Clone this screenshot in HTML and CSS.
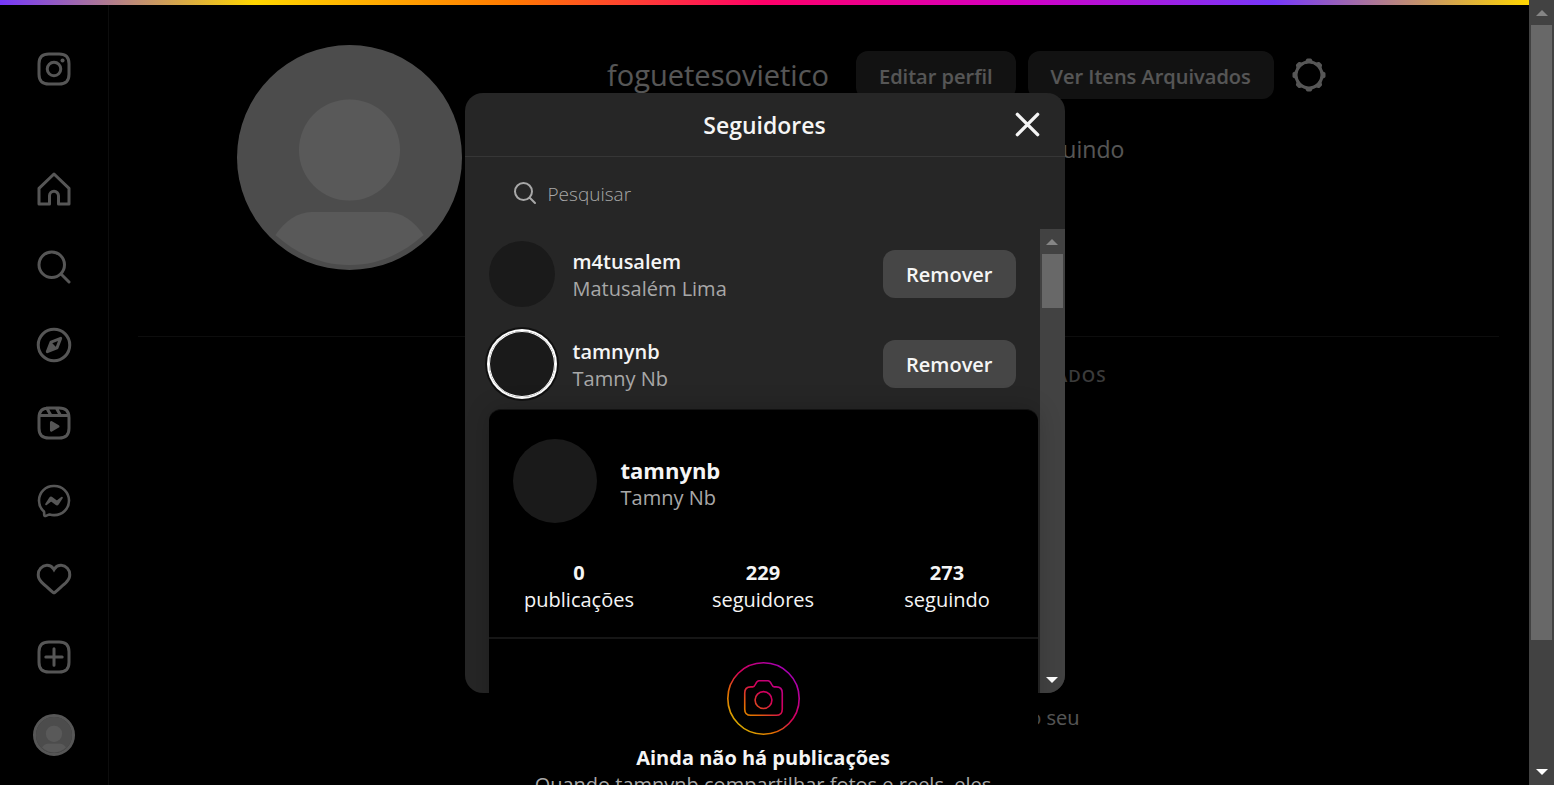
FILE: index.html
```html
<!DOCTYPE html>
<html lang="pt-BR">
<head>
<meta charset="utf-8">
<title>Seguidores • foguetesovietico</title>
<link rel="stylesheet" href="styles.css">
</head>
<body>
<svg class="defs" aria-hidden="true">
  <symbol id="person" viewBox="0 0 225 225">
    <circle class="person-bg" cx="112.500" cy="112.500" r="112.500"/>
    <circle class="person-fg" cx="112.500" cy="105" r="50.500"/>
    <path class="person-fg" d="M38.500 190C48 176 61 167 75 167H150C164 167 177 176 186.500 190C165 209 141 220 112.500 220S60 209 38.500 190Z"/>
  </symbol>
</svg>
<div class="app">
  <div class="page">
    <div class="rainbow"></div>
    <nav class="sidebar" aria-label="Principal">
      <a class="nav-item nav-logo" href="#" aria-label="Instagram"><svg class="icon" viewBox="0 0 24 24"><path d="M2 12v3.450c0 2.849.698 4.005 1.606 4.944.94.909 2.098 1.608 4.946 1.608h6.896c2.848 0 4.006-.7 4.946-1.608C21.302 19.455 22 18.300 22 15.450V8.552c0-2.849-.698-4.006-1.606-4.945C19.454 2.700 18.296 2 15.448 2H8.552c-2.848 0-4.006.699-4.946 1.607C2.698 4.547 2 5.703 2 8.552Z"/><circle cx="12" cy="12" r="4.500"/><circle class="solid" cx="17.700" cy="6.300" r="1.350"/></svg></a>
      <a class="nav-item" href="#" aria-label="Página inicial"><svg class="icon" viewBox="0 0 24 24"><path d="M9.005 16.545a2.997 2.997 0 0 1 2.997-2.997A2.997 2.997 0 0 1 15 16.545V22h7V11.543L12 2 2 11.543V22h7.005Z"/></svg></a>
      <a class="nav-item" href="#" aria-label="Pesquisa"><svg class="icon" viewBox="0 0 24 24"><path d="M19 10.500A8.500 8.500 0 1 1 10.500 2a8.500 8.500 0 0 1 8.500 8.500ZM16.511 16.511 22 22"/></svg></a>
      <a class="nav-item" href="#" aria-label="Explorar"><svg class="icon" viewBox="0 0 24 24"><path d="M13.941 13.953 7.581 16.424 10.060 10.056 16.420 7.585Z"/><path class="solid" d="M10.060 10.056 13.949 13.945 7.581 16.424Z"/><circle cx="12" cy="12" r="10.500"/></svg></a>
      <a class="nav-item" href="#" aria-label="Reels"><svg class="icon" viewBox="0 0 24 24"><path d="M2.049 7.002H21.950M13.504 2.001 16.362 7.002M7.207 2.110 10.002 7.002M2 12.001v3.449c0 2.849.698 4.006 1.606 4.945.94.908 2.098 1.607 4.946 1.607h6.896c2.848 0 4.006-.699 4.946-1.607.908-.939 1.606-2.096 1.606-4.945V8.552c0-2.848-.698-4.006-1.606-4.945C19.454 2.699 18.296 2 15.448 2H8.552c-2.848 0-4.006.699-4.946 1.607C2.698 4.546 2 5.704 2 8.552Z"/><path class="solid" d="M9.763 17.664a.908.908 0 0 1-.454-.787V11.630a.909.909 0 0 1 1.364-.788l4.545 2.624a.909.909 0 0 1 0 1.575l-4.545 2.624a.91.91 0 0 1-.91 0Z"/></svg></a>
      <a class="nav-item" href="#" aria-label="Mensagens"><svg class="icon" viewBox="0 0 24 24"><path class="medium" d="M12.003 2.001a9.705 9.705 0 1 1 0 19.400 10.876 10.876 0 0 1-2.895-.384.798.798 0 0 0-.533.04l-1.984.876a.801.801 0 0 1-1.123-.708l-.054-1.780a.806.806 0 0 0-.27-.569 9.490 9.490 0 0 1-3.140-7.175 9.650 9.650 0 0 1 10-9.700Z"/><path class="solid" d="M17.790 10.132a.659.659 0 0 0-.962-.873l-2.556 2.050a.63.63 0 0 1-.758.002L11.060 9.470a1.576 1.576 0 0 0-2.277.42l-2.567 3.980a.659.659 0 0 0 .961.875l2.556-2.049a.63.63 0 0 1 .759-.002l2.452 1.840a1.576 1.576 0 0 0 2.278-.42Z"/></svg></a>
      <a class="nav-item" href="#" aria-label="Notificações"><svg class="icon" viewBox="0 0 24 24"><path class="solid" d="M16.792 3.904A4.989 4.989 0 0 1 21.500 9.122c0 3.072-2.652 4.959-5.197 7.222-2.512 2.243-3.865 3.469-4.303 3.752-.477-.309-2.143-1.823-4.303-3.752C5.141 14.072 2.500 12.167 2.500 9.122a4.989 4.989 0 0 1 4.708-5.218 4.210 4.210 0 0 1 3.675 1.941c.84 1.175.98 1.763 1.120 1.763s.278-.588 1.110-1.766a4.170 4.170 0 0 1 3.679-1.938Zm0-2a6.040 6.040 0 0 0-4.797 2.127 6.052 6.052 0 0 0-4.787-2.127A6.985 6.985 0 0 0 .5 9.122c0 3.610 2.550 5.827 5.015 7.970.283.246.569.494.853.747l1.027.918a44.998 44.998 0 0 0 3.518 3.018 2 2 0 0 0 2.174 0 45.263 45.263 0 0 0 3.626-3.115l.922-.824c.293-.26.59-.519.885-.774 2.334-2.025 4.980-4.320 4.980-7.940a6.985 6.985 0 0 0-6.708-7.218Z"/></svg></a>
      <a class="nav-item" href="#" aria-label="Criar"><svg class="icon" viewBox="0 0 24 24"><path d="M2 12v3.450c0 2.849.698 4.005 1.606 4.944.94.909 2.098 1.608 4.946 1.608h6.896c2.848 0 4.006-.7 4.946-1.608C21.302 19.455 22 18.300 22 15.450V8.552c0-2.849-.698-4.006-1.606-4.945C19.454 2.700 18.296 2 15.448 2H8.552c-2.848 0-4.006.699-4.946 1.607C2.698 4.547 2 5.703 2 8.552ZM6.545 12.001H17.455M12.003 6.545V17.455"/></svg></a>
      <a class="nav-item" href="#" aria-label="Perfil"><span class="nav-avatar"><svg viewBox="0 0 225 225"><use href="#person"/></svg></span></a>
    </nav>

    <main class="profile">
      <header class="profile-head">
        <svg class="profile-photo" viewBox="0 0 225 225" role="img" aria-label="Foto do perfil"><use href="#person"/></svg>
        <section class="profile-info">
          <div class="profile-row">
            <h2 class="username">foguetesovietico</h2>
            <div class="profile-actions">
              <button class="btn btn-dark" type="button">Editar perfil</button>
              <button class="btn btn-dark" type="button">Ver Itens Arquivados</button>
            </div>
            <button class="icon-btn" type="button" aria-label="Opções"><svg class="icon" viewBox="0 0 24 24"><circle cx="12" cy="12" r="8.635"/><path d="M14.232 3.656a1.269 1.269 0 0 1-.796-.66L12.930 2h-1.860l-.505.996a1.269 1.269 0 0 1-.796.66m-.001 16.688a1.269 1.269 0 0 1 .796.66l.505.996h1.862l.505-.996a1.269 1.269 0 0 1 .796-.66M3.656 9.768a1.269 1.269 0 0 1-.66.796L2 11.070v1.862l.996.505a1.269 1.269 0 0 1 .66.796m16.688-.001a1.269 1.269 0 0 1 .66-.796L22 12.930v-1.860l-.996-.505a1.269 1.269 0 0 1-.66-.796M7.678 4.522a1.269 1.269 0 0 1-1.030.096l-1.060-.348L4.270 5.587l.348 1.062a1.269 1.269 0 0 1-.096 1.030m11.800 11.799a1.269 1.269 0 0 1 1.030-.096l1.060.348 1.318-1.317-.348-1.062a1.269 1.269 0 0 1 .096-1.030m-14.956.001a1.269 1.269 0 0 1 .096 1.030l-.348 1.060 1.317 1.318 1.062-.348a1.269 1.269 0 0 1 1.030.096m11.799-11.800a1.269 1.269 0 0 1-.096-1.030l.348-1.060-1.317-1.318-1.062.348a1.269 1.269 0 0 1-1.030-.096"/></svg></button>
          </div>
          <p class="profile-stats">seguindo</p>
        </section>
      </header>
      <div class="tabs"><a class="tab" href="#">MARCADOS</a></div>
      <p class="profile-empty">no seu</p>
    </main>

    <div class="backdrop">
      <div class="dialog" role="dialog" aria-labelledby="dialog-title">
        <header class="dialog-head">
          <h1 class="dialog-title" id="dialog-title">Seguidores</h1>
          <button class="close" type="button" aria-label="Fechar"><svg viewBox="0 0 24 24"><path d="M3 3 21 21M21 3 3 21"/></svg></button>
        </header>
        <label class="search">
          <svg class="search-icon" viewBox="0 0 24 24"><path d="M19 10.500A8.500 8.500 0 1 1 10.500 2a8.500 8.500 0 0 1 8.500 8.500ZM16.511 16.511 22 22"/></svg>
          <input class="search-input" type="text" placeholder="Pesquisar" aria-label="Pesquisar">
        </label>
        <div class="list-area">
          <ul class="list">
            <li class="follower">
              <span class="avatar"></span>
              <div class="who"><a class="who-user" href="#">m4tusalem</a><span class="who-name">Matusalém Lima</span></div>
              <button class="btn btn-grey" type="button">Remover</button>
            </li>
            <li class="follower">
              <span class="avatar avatar-story"></span>
              <div class="who"><a class="who-user" href="#">tamnynb</a><span class="who-name">Tamny Nb</span></div>
              <button class="btn btn-grey" type="button">Remover</button>
            </li>
          </ul>
          <div class="scrollbar" aria-hidden="true"><i class="arrow arrow-up"></i><i class="thumb thumb-list"></i><i class="arrow arrow-down"></i></div>
        </div>

        <article class="hovercard">
          <header class="card-head">
            <span class="avatar avatar-large"></span>
            <div class="who"><a class="who-user who-user-large" href="#">tamnynb</a><span class="who-name">Tamny Nb</span></div>
          </header>
          <ul class="card-stats">
            <li><strong>0</strong><span>publicações</span></li>
            <li><strong>229</strong><span>seguidores</span></li>
            <li><strong>273</strong><span>seguindo</span></li>
          </ul>
          <section class="card-empty">
            <svg class="camera" viewBox="0 0 72 72" aria-hidden="true">
              <defs><linearGradient id="glow" gradientUnits="userSpaceOnUse" x1="10" y1="66" x2="62" y2="8"><stop offset="0" stop-color="#d6b300"/><stop offset=".28" stop-color="#e36c00"/><stop offset=".55" stop-color="#d60058"/><stop offset="1" stop-color="#a400b8"/></linearGradient></defs>
              <circle cx="36" cy="36" r="35.200"/>
              <path d="M23.500 24.500H25.500C28.500 24.500 28 18.500 31.500 18.500H40.500C44 18.500 43.500 24.500 46.500 24.500H48.500Q54.500 24.500 54.500 30.500V46.500Q54.500 52.500 48.500 52.500H23.500Q17.500 52.500 17.500 46.500V30.500Q17.500 24.500 23.500 24.500Z"/>
              <circle cx="36" cy="37.500" r="8.300"/>
            </svg>
            <h2 class="card-title">Ainda não há publicações</h2>
            <p class="card-text">Quando tamnynb compartilhar fotos e reels, eles</p>
          </section>
        </article>
      </div>
    </div>
  </div>
  <div class="scrollbar" aria-hidden="true"><i class="arrow arrow-up"></i><i class="thumb thumb-page"></i><i class="arrow arrow-down"></i></div>
</div>
</body>
</html>
```
FILE: styles.css
```css
* { box-sizing: border-box; }
body, h1, h2, p, ul { margin: 0; padding: 0; }
ul { list-style: none; }
body {
  background: #000;
  color: #f5f5f5;
  font-family: "Segoe UI", "Open Sans", "Noto Sans", sans-serif;
  font-size: 20px;
  line-height: 27px;
  overflow: hidden;
}
a { color: inherit; text-decoration: none; }
button { font: inherit; color: inherit; border: 0; background: none; padding: 0; }
svg { display: block; fill: none; }
.defs { display: none; }
.person-bg { fill: #dbdbdb; }
.person-fg { fill: #fff; }

.app { display: flex; height: 100vh; overflow: hidden; }
.page { flex: 1; min-width: 0; position: relative; display: flex; }
.rainbow {
  position: absolute; top: 0; left: 0; right: 0; height: 5px; z-index: 3;
  background: linear-gradient(90deg, #7638fa, #ffd600, #ff7a00, #ff0069, #d300c5, #7638fa, #ffd600);
}

/* Sidebar */
.sidebar {
  width: 109px; border-right: 1px solid #262626;
  display: flex; flex-direction: column; align-items: center; gap: 6px;
  padding-top: 33px;
}
.nav-item { flex: none; width: 72px; height: 72px; display: grid; place-items: center; }
.nav-logo { margin-bottom: 42px; }
.icon { width: 36px; height: 36px; stroke: #f5f5f5; stroke-width: 2; stroke-linecap: round; stroke-linejoin: round; }
.icon .solid { fill: #f5f5f5; stroke: none; }
.icon .medium { stroke-width: 1.739; }
.nav-avatar { width: 42px; height: 42px; border: 3px solid #f5f5f5; border-radius: 50%; background: #999; }

/* Profile */
.profile { flex: 1; min-width: 0; padding: 45px 30px 0 29px; }
.profile-head { display: flex; padding-bottom: 66px; border-bottom: 1px solid #262626; }
.profile-photo { flex: none; width: 225px; height: 225px; margin: 0 145px 0 99px; }
.profile-row { display: flex; align-items: center; height: 60px; }
.username { font-size: 29px; line-height: 36px; font-weight: 400; width: 249px; }
.profile-actions { display: flex; gap: 12px; margin-right: 17px; }
.btn { height: 48px; border-radius: 12px; padding: 2px 23px 0; font-weight: 600; white-space: nowrap; }
.btn-dark { background: #363636; }
.profile-stats { padding: 29px 0 0 419px; font-size: 23px; line-height: 30px; }
.tabs { max-width: 576px; margin: 0 auto; padding-top: 24px; text-align: right; }
.tab { font-size: 17px; letter-spacing: 1px; color: #a8a8a8; font-weight: 600; }
.profile-empty { max-width: 522px; margin: 0 auto; padding-top: 315px; text-align: right; }

/* Dialog */
.backdrop { position: absolute; inset: 0; background: rgba(0, 0, 0, .65); display: grid; place-items: center; z-index: 2; }
.dialog { position: relative; width: 600px; height: 600px; background: #262626; border-radius: 18px; display: flex; flex-direction: column; }
.dialog-head { display: grid; grid-template-columns: 75px 1fr 75px; align-items: center; height: 64px; border-bottom: 1px solid #363636; }
.dialog-title { grid-column: 2; padding-top: 2px; font-size: 23px; font-weight: 600; text-align: center; }
.close { justify-self: center; }
.close svg { width: 27px; height: 27px; stroke: #f5f5f5; stroke-width: 3; stroke-linecap: round; }
.search { display: flex; align-items: center; gap: 11px; height: 72px; padding: 0 48px; }
.search-icon { width: 24px; height: 24px; stroke: #a8a8a8; stroke-width: 2; stroke-linecap: round; }
.search-input { flex: 1; border: 0; outline: 0; background: none; padding: 3px 0 0; font: inherit; font-size: 19px; font-weight: 300; color: #f5f5f5; }
.search-input::placeholder { color: #a8a8a8; opacity: 1; }
.list-area { flex: 1; display: flex; overflow: hidden; border-bottom-right-radius: 18px; }
.list { flex: 1; }
.follower { display: flex; align-items: center; gap: 18px; height: 90px; padding: 0 24px; }
.avatar { flex: none; width: 66px; height: 66px; border-radius: 50%; background: #1a1a1a; }
.avatar-story { box-shadow: 0 0 0 1px #fff inset, 0 0 0 2px #fff, 0 0 0 4px #111; }
.avatar-large { width: 84px; height: 84px; }
.who { flex: 1; display: flex; flex-direction: column; padding-top: 2px; }
.who-user { font-weight: 600; }
.who-user-large { font-size: 22px; font-weight: 700; }
.who-name { color: #a8a8a8; }
.btn-grey { background: #464646; }

/* Hover card */
.hovercard {
  position: absolute; top: 316px; left: 24px; width: 549px;
  background: #000; border-top: 1px solid #121212; border-radius: 12px 12px 0 0;
  box-shadow: 0 0 24px rgba(0, 0, 0, .2);
}
.card-head { display: flex; align-items: center; gap: 24px; padding: 29px 24px 36px; }
.card-head .who { padding-top: 6px; }
.card-stats { display: grid; grid-template-columns: repeat(3, 1fr); gap: 3px; padding-bottom: 24px; text-align: center; border-bottom: 2px solid #161616; }
.card-stats li { display: flex; flex-direction: column; }
.card-stats strong { font-weight: 700; }
.card-empty { display: flex; flex-direction: column; align-items: center; padding: 23px 24px 48px; text-align: center; }
.camera { width: 73px; height: 73px; stroke: url(#glow); stroke-width: 1.600; margin-bottom: 9px; }
.card-title { font-size: 20px; font-weight: 700; }
.card-text { color: #a8a8a8; }

/* Scrollbars */
.scrollbar { flex: none; width: 25px; background: #424242; display: flex; flex-direction: column; align-items: center; }
.arrow { flex: none; width: 0; height: 0; border: 6px solid transparent; border-top-width: 0; border-bottom-width: 0; }
.arrow-up { border-bottom: 6px solid #858585; margin: 10px 0 9px; }
.arrow-down { border-top: 6px solid #fff; margin: auto 0 10px; }
.thumb { width: 21px; background: #686868; }
.thumb-page { height: 78.300%; }
.thumb-list { height: 54px; }
```
